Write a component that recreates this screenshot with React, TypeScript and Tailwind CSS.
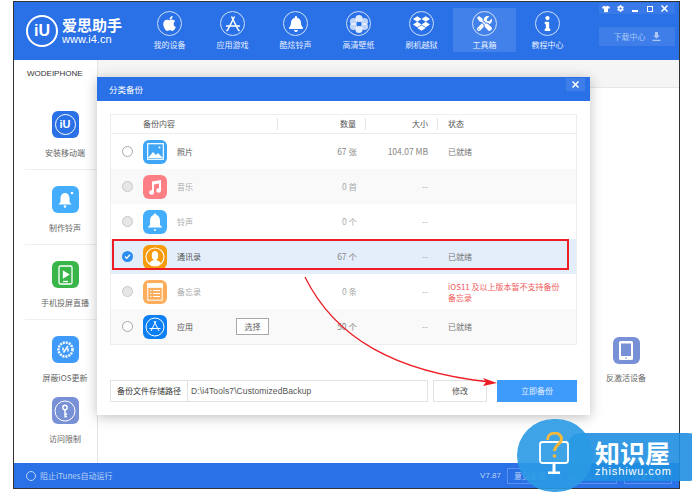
import type { ReactNode } from "react";
import { FaApple, FaBell, FaDropbox, FaInfo, FaTools, FaTshirt, FaCog } from "react-icons/fa";

const font = "[font-family:'Noto_Sans_CJK_SC','Liberation_Sans',sans-serif]";

const navItems: { label: string; icon: ReactNode; active?: boolean }[] = [
  { label: "我的设备", icon: <FaApple size={17} /> },
  {
    label: "应用游戏",
    icon: (
      <svg width="20" height="20" viewBox="0 0 20 20" fill="none" stroke="white" strokeWidth="1.500">
        <path d="M8.500 2.500l6.500 13M11.500 2.500L5 15.500M3 12h14M15 15.500l1.500 1.500M5 15.500L3.500 17" />
      </svg>
    ),
  },
  { label: "酷炫铃声", icon: <FaBell size={16} /> },
  {
    label: "高清壁纸",
    icon: (
      <svg width="20" height="20" viewBox="0 0 20 20" fill="white">
        <circle cx="10" cy="4.500" r="3.600" opacity=".85" />
        <circle cx="10" cy="15.500" r="3.600" opacity=".85" />
        <circle cx="4.500" cy="7.500" r="3.600" opacity=".7" />
        <circle cx="15.500" cy="7.500" r="3.600" opacity=".7" />
        <circle cx="4.500" cy="12.500" r="3.600" opacity=".7" />
        <circle cx="15.500" cy="12.500" r="3.600" opacity=".7" />
      </svg>
    ),
  },
  { label: "刷机越狱", icon: <FaDropbox size={17} /> },
  { label: "工具箱", icon: <FaTools size={15} />, active: true },
  { label: "教程中心", icon: <FaInfo size={15} /> },
];

const Tile = ({ bg, children }: { bg: string; children: ReactNode }) => (
  <div className={`w-[27px] h-[27px] rounded-[6px] flex items-center justify-center shrink-0 ${bg}`}>{children}</div>
);

const SideItem = ({ icon, label }: { icon: ReactNode; label: string }) => (
  <div className="flex flex-col items-center h-[75px] pt-[16px] ml-[11px] pl-[8px] w-[72px] border-b border-[#efefef]">
    {icon}
    <div className="mt-[9px] text-[8px] leading-[12px] text-[#666] whitespace-nowrap">{label}</div>
  </div>
);

const rows = [
  {
    name: "照片", count: "67 张", size: "104.07 MB", status: "已就绪", bg: "bg-white", off: false,
    tile: "bg-[#3fa5f7]",
    icon: (
      <svg width="17" height="17" viewBox="0 0 17 17">
        <rect x=".7" y=".7" width="15.600" height="15.600" fill="none" stroke="white" strokeWidth="1.200" />
        <path d="M1 15l5-6 3 3 2-2 5 5z" fill="white" />
        <circle cx="12.500" cy="4.500" r="1" fill="white" />
      </svg>
    ),
  },
  {
    name: "音乐", count: "0 首", size: "--", status: "", bg: "bg-[#f9f9f9]", off: true,
    tile: "bg-[#fb7f85]",
    icon: (
      <svg width="16" height="16" viewBox="0 0 16 16" fill="white">
        <path d="M5 2.500L14 1v10.500a2.400 2.200 0 1 1-2-2.100V4.500L7 5.400v8a2.400 2.200 0 1 1-2-2.100z" />
      </svg>
    ),
  },
  {
    name: "铃声", count: "0 个", size: "--", status: "", bg: "bg-white", off: true,
    tile: "bg-[#45aefc]",
    icon: (
      <svg width="18" height="20" viewBox="0 0 18 20" fill="white">
        <path d="M9 1.500a1.300 1.300 0 0 1 1.300 1.400C13 3.600 14 6 14 9v4l2.500 2.500h-15L4 13V9c0-3 1-5.400 3.700-6.100A1.300 1.300 0 0 1 9 1.500z" />
        <circle cx="9" cy="18" r="1" />
      </svg>
    ),
  },
  {
    name: "通讯录", count: "67 个", size: "--", status: "已就绪", bg: "bg-[#e4eefb]", off: false, on: true,
    tile: "bg-[#f79a0c]",
    icon: (
      <svg width="20" height="20" viewBox="0 0 20 20">
        <circle cx="10" cy="10" r="9" fill="none" stroke="white" strokeWidth="1.100" />
        <ellipse cx="10" cy="8.500" rx="3.200" ry="4.500" fill="white" />
        <path d="M4 16.500c1-2.500 3.500-2.500 4.500-3.500h3c1 1 3.500 1 4.500 3.500a9 9 0 0 1-12 0z" fill="white" />
      </svg>
    ),
  },
  {
    name: "备忘录", count: "0 条", size: "--", status: "warn", bg: "bg-white", off: true,
    tile: "bg-[#fdae5c]",
    icon: (
      <svg width="16" height="18" viewBox="0 0 16 18" fill="none" stroke="white" strokeWidth="1">
        <rect x=".8" y=".8" width="14.400" height="16.400" />
        <rect x=".8" y=".8" width="14.400" height="3.500" fill="white" />
        <path d="M3 7.500h1.500M6 7.500h7M3 10.500h1.500M6 10.500h7M3 13.500h1.500M6 13.500h7" />
      </svg>
    ),
  },
  {
    name: "应用", count: "50 个", size: "--", status: "已就绪", bg: "bg-[#f9f9f9]", off: false, pick: true,
    tile: "bg-[#0d7ff5]",
    icon: (
      <svg width="20" height="20" viewBox="0 0 20 20" fill="none" stroke="white" strokeWidth="1">
        <circle cx="10" cy="10" r="9" />
        <path d="M9 4l5 10M11 4L6 14M4.500 11.500h11" />
      </svg>
    ),
  },
];

const Radio = ({ on, off }: { on?: boolean; off?: boolean }) =>
  on ? (
    <div className="w-[11px] h-[11px] rounded-full bg-[#2c8df0] flex items-center justify-center">
      <svg width="7" height="7" viewBox="0 0 7 7" fill="none" stroke="white" strokeWidth="1.300">
        <path d="M1 3.500l1.800 1.800L6 1.800" />
      </svg>
    </div>
  ) : (
    <div className={`w-[11px] h-[11px] rounded-full border ${off ? "bg-[#e6e6e6] border-[#c8c8c8]" : "bg-white border-[#a9a9a9]"}`} />
  );

export default function App() {
  return (
    <div className={`relative w-[692px] h-[492px] bg-white overflow-hidden pl-[13px] pt-px ${font}`}>
      <div className="relative w-[667px] h-[488px] border border-[#333] flex flex-col">
        {/* top bar */}
        <div className="h-[58px] bg-[#2a70e6] flex text-white shrink-0">
          <div className="w-[124px] flex items-center pl-[12px] gap-[4px] shrink-0">
            <div className="w-[32px] h-[32px] rounded-full border-2 border-white flex items-center justify-center text-[16px] font-bold leading-none [font-family:'Liberation_Sans',sans-serif] shrink-0">
              iU
            </div>
            <div>
              <div className="text-[15px] leading-[15px] font-bold whitespace-nowrap">爱思助手</div>
              <div className="mt-[2px] text-[11px] leading-[11px] [font-family:'Liberation_Sans',sans-serif]">www.i4.cn</div>
            </div>
          </div>
          <div className="flex pt-[6px] h-[52px]">
            {navItems.map((n) => (
              <div key={n.label} className={`w-[63px] h-[44px] flex flex-col items-center ${n.active ? "bg-[#4280ea]" : ""}`}>
                <div className="w-[25px] h-[25px] mt-[3px] rounded-full border border-[#cfe0fa] flex items-center justify-center shrink-0">
                  {n.icon}
                </div>
                <div className="mt-[3px] text-[8px] leading-[12px] whitespace-nowrap text-[#e6efff]">{n.label}</div>
              </div>
            ))}
          </div>
          <div className="ml-auto w-[76px] mr-[4px] flex flex-col items-stretch">
            <div className="h-[11px] mt-[1px] bg-[#3a7ae8] flex items-center">
              <span className="w-[14.500px] flex justify-center"><FaTshirt size={8} /></span>
              <span className="w-[14.500px] flex justify-center"><FaCog size={7} /></span>
              <span className="w-[14.500px] flex justify-center"><span className="w-[6px] h-[2px] mt-[4px] bg-white" /></span>
              <span className="w-[14.500px] flex justify-center"><span className="w-[6px] h-[6px] border border-white" /></span>
              <span className="w-[14.500px] flex justify-center">
                <svg width="7" height="7" viewBox="0 0 7 7" stroke="white" strokeWidth="1.500"><path d="M.5.5l6 6M6.500.5l-6 6" /></svg>
              </span>
            </div>
            <div className="h-[19px] mt-[13px] bg-[#3f7ee9] flex items-center justify-center gap-[6px] text-[8px] text-[#a9c6f5]">
              下载中心
              <svg width="9" height="9" viewBox="0 0 9 9" fill="#a9c6f5"><path d="M3 0h3v3.500h2L4.500 6.500 1 3.500h2zM.5 7.800h8V9h-8z" /></svg>
            </div>
          </div>
        </div>

        {/* body */}
        <div className="flex-1 flex min-h-0">
          <div className="w-[84px] bg-white border-r border-[#e4e4e4] shrink-0">
            <div className="h-[35px] pt-[8px] pl-[13px] text-[8px] leading-[12px] text-[#333] [font-family:'Liberation_Sans',sans-serif]">WODEIPHONE</div>
            <SideItem
              label="安装移动端"
              icon={
                <Tile bg="bg-[#2a70e6]">
                  <div className="w-[21px] h-[21px] rounded-full border border-white text-white text-[11px] font-bold flex items-center justify-center [font-family:'Liberation_Sans',sans-serif]">iU</div>
                </Tile>
              }
            />
            <SideItem
              label="制作铃声"
              icon={
                <Tile bg="bg-[#45aefc]">
                  <svg width="19" height="19" viewBox="0 0 19 19" fill="white">
                    <path d="M9 3c3 0 4.500 2.500 4.500 5.500V12l2 2.500h-13l2-2.500V8.500C4.500 5.500 6 3 9 3z" />
                    <circle cx="9" cy="16.500" r="1.300" />
                    <circle cx="16" cy="3" r="1.300" />
                  </svg>
                </Tile>
              }
            />
            <SideItem
              label="手机投屏直播"
              icon={
                <Tile bg="bg-[#3ab54a]">
                  <svg width="15" height="20" viewBox="0 0 15 20" fill="none" stroke="white" strokeWidth="1.300">
                    <rect x="1" y="1" width="13" height="18" rx="1.500" />
                    <path d="M5.500 6.500l5 3-5 3z" fill="white" />
                    <path d="M5 16.500h5" />
                  </svg>
                </Tile>
              }
            />
            <div className="flex flex-col items-center ml-[11px] pl-[8px] w-[72px] pt-[16px]">
              <Tile bg="bg-[#3f9af9]">
                <svg width="21" height="21" viewBox="0 0 21 21" fill="none" stroke="white">
                  <circle cx="10.500" cy="10.500" r="7" strokeWidth="2.500" strokeDasharray="2 1" />
                  <path d="M13 7l-4.500 6.500M8 8.500v3M13 9.500v3" strokeWidth="1.500" />
                </svg>
              </Tile>
              <div className="mt-[9px] text-[8px] leading-[12px] text-[#666] whitespace-nowrap">屏蔽iOS更新</div>
              <div className="mt-[13px]">
                <Tile bg="bg-[#7890d6]">
                  <svg width="22" height="22" viewBox="0 0 22 22" fill="none" stroke="white" strokeWidth="1">
                    <circle cx="11" cy="11" r="10" />
                    <circle cx="11" cy="7.500" r="2.200" strokeWidth="1.400" />
                    <path d="M11 9.500v8M11 14h2M11 16.500h2" strokeWidth="1.400" />
                  </svg>
                </Tile>
              </div>
              <div className="mt-[9px] text-[8px] leading-[12px] text-[#666] whitespace-nowrap">访问限制</div>
            </div>
          </div>
          <div className="flex-1 flex flex-col">
            <div className="h-[28px] bg-[#f5f5f5] border-b border-[#e6e6e6]" />
            <div className="flex-1 bg-white flex justify-end">
              <div className="mr-[23px] mt-[249px] w-[60px] h-fit flex flex-col items-center">
                <Tile bg="bg-[#7890d6]">
                  <svg width="14" height="19" viewBox="0 0 14 19" fill="white">
                    <path fillRule="evenodd" d="M1.500 0h11A1.500 1.500 0 0 1 14 1.500v16a1.500 1.500 0 0 1-1.500 1.500h-11A1.500 1.500 0 0 1 0 17.500v-16A1.500 1.500 0 0 1 1.500 0zM2 2.500V15h10V2.500z" />
                    <circle cx="7" cy="17" r=".8" fill="#7890d6" />
                  </svg>
                </Tile>
                <div className="mt-[8px] text-[8px] leading-[12px] text-[#666] whitespace-nowrap">反激活设备</div>
              </div>
            </div>
          </div>
        </div>

        {/* footer */}
        <div className="h-[25px] bg-[#2a70e6] flex items-center text-[#bcd3f8] text-[8px] shrink-0">
          <div className="ml-[12px] w-[10px] h-[10px] rounded-full border border-[#bcd3f8]" />
          <span className="ml-[4px]">阻止iTunes自动运行</span>
          <span className="ml-auto mr-[6px] [font-family:'Liberation_Sans',sans-serif]">V7.87</span>
          <div className="w-[46px] h-[16px] border border-[#5b91ec] flex items-center justify-center mr-[7px]">意见反馈</div>
          <div className="w-[57px] h-[16px] border border-[#5b91ec] flex items-center justify-center mr-[7px]">微信公众号</div>
          <div className="w-[48px] h-[16px] border border-[#5b91ec] flex items-center justify-center mr-[7px]">检查更新</div>
        </div>
      </div>

      {/* dialog */}
      <div className="absolute left-[97px] top-[77px] w-[493px] h-[338px] bg-white shadow-[0_2px_12px_rgba(0,0,0,0.25)] flex flex-col">
        <div className="h-[24px] bg-[#2a70e6] flex items-center justify-between pl-[12px] text-white text-[8.500px] shrink-0">
          分类备份
          <div className="w-[19px] h-[13px] mr-[5px] -mt-[10px] bg-[#3f7ee9] flex items-center justify-center">
            <svg width="7" height="7" viewBox="0 0 7 7" stroke="white" strokeWidth="1.500"><path d="M.5.5l6 6M6.500.5l-6 6" /></svg>
          </div>
        </div>
        <div className="mx-[13px] mt-[13px] border border-[#eeeeee]">
          <div className="h-[19px] flex items-center text-[8px] text-[#555] border-b border-[#ececec]">
            <div className="w-[32px]" />
            <div className="w-[135px] border-r border-[#e8e8e8] leading-[12px]">备份内容</div>
            <div className="w-[88px] pr-[9px] text-right border-r border-[#e8e8e8] leading-[12px]">数量</div>
            <div className="w-[72px] pr-[9px] text-right border-r border-[#e8e8e8] leading-[12px]">大小</div>
            <div className="pl-[10px] leading-[12px]">状态</div>
          </div>
          {rows.map((r) => (
            <div key={r.name} className={`h-[35px] flex items-center text-[8px] ${r.bg}`}>
              <div className="w-[32px] pl-[11px]">
                <Radio on={r.on} off={r.off} />
              </div>
              <Tile bg={`${r.tile} !w-[24px] !h-[24px]`}>{r.icon}</Tile>
              <div className={`w-[69px] pl-[10px] ${r.off ? "text-[#aaa]" : "text-[#555]"}`}>{r.name}</div>
              <div className="w-[61px]">
                {r.pick && (
                  <div className="w-[33px] h-[17px] border border-[#a8a8a8] flex items-center justify-center text-[#666] bg-white">选择</div>
                )}
              </div>
              <div className={`w-[60px] text-right text-[8.500px] ${r.off ? "text-[#aaa]" : "text-[#888]"}`}>{r.count}</div>
              <div className={`w-[71px] text-right text-[8.500px] ${r.size === "--" ? "text-[#aaa]" : "text-[#888]"}`}>{r.size}</div>
              <div className="pl-[20px]">
                {r.status === "warn" ? (
                  <div className="w-[118px] leading-[11px] text-[#f05a5a]">iOS11 及以上版本暂不支持备份备忘录</div>
                ) : (
                  <span className="text-[#777]">{r.status}</span>
                )}
              </div>
            </div>
          ))}
        </div>
        <div className="mx-[13px] mt-[35px] flex h-[22px] text-[8px]">
          <div className="w-[78px] border border-[#e2e2e2] flex items-center justify-center text-[#333]">备份文件存储路径</div>
          <div className="w-[240px] border-y border-r border-[#e2e2e2] flex items-center pl-[3px] text-[#555] text-[8.500px] tracking-[0.1px] [font-family:'Liberation_Sans',sans-serif]">D:\i4Tools7\CustomizedBackup</div>
          <div className="w-[54px] ml-[5px] border border-[#e2e2e2] flex items-center justify-center text-[#555]">修改</div>
          <div className="w-[80px] ml-[10px] bg-[#3f9bfb] text-[#e8f2ff] flex items-center justify-center">立即备份</div>
        </div>
      </div>

      {/* red annotation */}
      <div className="absolute left-[112px] top-[239px] w-[457px] h-[31px] border-2 border-[#ee1c25]" />
      <svg className="absolute left-0 top-0 pointer-events-none" width="692" height="492" viewBox="0 0 692 492" fill="none">
        <path d="M305 277C335 338 395 372 490 382" stroke="#ee1c25" strokeWidth="1.300" />
        <path d="M483 378l14 5-14 3 3-4z" fill="#ee1c25" />
      </svg>

      {/* watermark */}
      <div className="absolute left-[517px] top-[419px] w-[175px] h-[73px]">
        <div className="absolute left-[50px] top-[14px] w-[135px] h-[48px] rounded-[14px] bg-[#1f8fe0]/90" />
        <div className="absolute left-0 top-0 w-[76px] h-[73px] rounded-full bg-[#2a9ae4]/90" />
        <svg className="absolute left-[22px] top-[13px]" width="32" height="42" viewBox="0 0 32 42" fill="none">
          <rect x="1" y="10" width="28" height="21" rx="2.500" stroke="white" strokeWidth="1.800" />
          <path d="M9 41h12M15 31v9" stroke="white" strokeWidth="3" />
          <path d="M8.500 8c0-9 14-9 14-1 0 5-7 6-7 12" stroke="#f5b83d" strokeWidth="3" />
          <circle cx="15.500" cy="24" r="1.800" fill="#f5b83d" />
        </svg>
        <div className="absolute left-[78px] top-[19px] text-[25px] leading-[28px] font-bold text-white whitespace-nowrap">知识屋</div>
        <div className="absolute left-[78px] top-[46px] text-[11px] leading-[13px] text-white whitespace-nowrap tracking-[0.9px] [font-family:'Liberation_Sans',sans-serif]">zhishiwu.com</div>
      </div>
    </div>
  );
}
